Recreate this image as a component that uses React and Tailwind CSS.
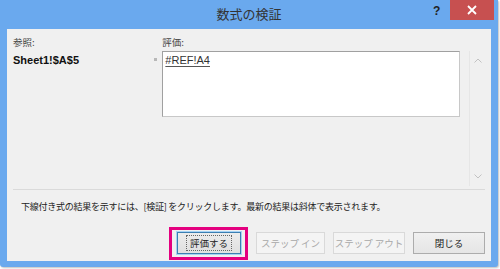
import React from 'react';

const jp = { fontFamily: '"Noto Sans CJK JP", "Noto Sans", sans-serif' };

function DialogButton({ label, disabled, width, focused }) {
  return (
    <div className="relative">
      {focused && (
        <span className="absolute -left-[8px] -right-[7px] -top-[5px] -bottom-[6px] border-[3px] border-[#e4007f]" />
      )}
      <button
        className={
          'h-[22px] flex items-center justify-center text-[9.5px] border ' +
          (disabled
            ? 'border-[#d9d9d9] bg-[#f4f4f4] text-[#a8a8a8]'
            : focused
            ? 'border-[#3c7fb1] bg-gradient-to-b from-[#ececec] to-[#e0e0e0] text-[#222] outline outline-1 outline-[#a6d2f5]'
            : 'border-[#acacac] bg-gradient-to-b from-[#f0f0f0] to-[#e5e5e5] text-[#222]')
        }
        style={{ width }}
        disabled={disabled}
      >
        {focused ? (
          <span className="px-[3px] border border-dotted border-[#666] leading-[14px]">{label}</span>
        ) : (
          label
        )}
      </button>
    </div>
  );
}

export default function App() {
  return (
    <div className="w-[500px] h-[269px] bg-white" style={jp}>
      <div className="w-[498px] h-[267px] bg-[#6aa9ee] flex flex-col rounded-b-[3px] shadow-[1px_1px_2px_rgba(0,0,0,0.25)]">
        {/* title bar */}
        <div className="h-[29px] relative flex items-center justify-center">
          <span className="text-[13px] text-[#333] mt-[-2px]">数式の検証</span>
          <span className="absolute left-[433px] top-[2px] text-[12px] font-bold text-[#222]" style={{ fontFamily: '"Liberation Sans", sans-serif' }}>?</span>
          <div className="absolute left-[450px] top-0 w-[44px] h-[20px] bg-[#c75050] flex items-center justify-center">
            <svg width="10" height="10" viewBox="0 0 10 10">
              <path d="M1 1 L9 9 M9 1 L1 9" stroke="#fff" strokeWidth="1.8" />
            </svg>
          </div>
        </div>

        {/* client area */}
        <div className="mx-[7px] h-[232px] bg-[#f0f0f0] px-[6px] pt-[6px] flex flex-col">
          <div className="flex h-[154px]">
            <div className="w-[150px] flex flex-col">
              <div className="h-[16px] text-[9.5px] text-[#444] leading-[14px]">参照:</div>
              <div className="h-[18px] flex items-center justify-between">
                <span className="text-[11px] font-bold text-[#111]" style={{ fontFamily: '"Liberation Sans", sans-serif' }}>Sheet1!$A$5</span>
                <span className="w-[3px] h-[3px] bg-[#b8b8b8] mr-[5px] mt-[-2px]" />
              </div>
            </div>
            <div className="w-[299px] flex flex-col">
              <div className="h-[16px] text-[9.5px] text-[#444] leading-[14px]">評価:</div>
              <div className="h-[66px] bg-white border border-t-[#a0a0a0] border-l-[#a0a0a0] border-r-[#c8c8c8] border-b-[#c8c8c8] px-[2px] pt-[1px] leading-[14px] text-[11px]" style={{ fontFamily: '"Liberation Sans", sans-serif' }}>
                <span className="text-[#333] underline underline-offset-2 decoration-[#555]">#REF!A4</span>
              </div>
            </div>
            <div className="ml-[9px] mt-[16px] w-[16px] h-[135px] border-l border-[#e6e6e6] flex flex-col items-center justify-between py-[7px]">
              <svg width="8" height="5" viewBox="0 0 8 5">
                <path d="M0.5 4.5 L4 1 L7.5 4.5" fill="none" stroke="#c2c2c2" strokeWidth="1" />
              </svg>
              <svg width="8" height="5" viewBox="0 0 8 5">
                <path d="M0.5 0.5 L4 4 L7.5 0.5" fill="none" stroke="#c2c2c2" strokeWidth="1" />
              </svg>
            </div>
          </div>
          <div className="border-t border-[#dadada]" />
          <div className="pl-[8px] mt-[9px] h-[16px] text-[9px] tracking-[-0.25px] leading-[16px] text-[#222]">
            下線付き式の結果を示すには、[検証] をクリックします。最新の結果は斜体で表示されます。
          </div>
          <div className="mt-[17px] flex justify-end">
            <DialogButton label="評価する" width={64} focused />
            <div className="w-[15px]" />
            <DialogButton label="ステップ イン" width={69} disabled />
            <div className="w-[8px]" />
            <DialogButton label="ステップ アウト" width={72} disabled />
            <div className="w-[8px]" />
            <DialogButton label="閉じる" width={72} />
          </div>
        </div>
      </div>
    </div>
  );
}
